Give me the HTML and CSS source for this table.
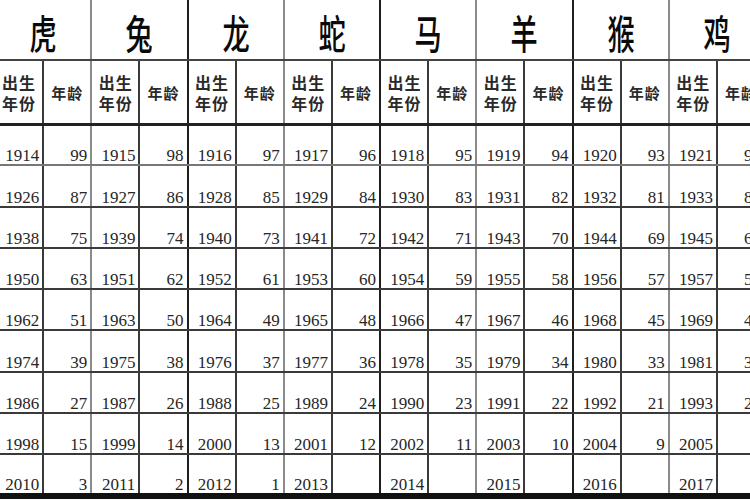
FILE: index.html
```html
<!DOCTYPE html>
<html lang="zh">
<head>
<meta charset="utf-8">
<title>生肖年龄对照表</title>
<link rel="stylesheet" href="styles.css">
</head>
<body>
<div class="sheet">
<table class="zodiac">
<colgroup>
<col class="c"><col class="c"><col class="c"><col class="c"><col class="c"><col class="c"><col class="c"><col class="c">
<col class="c"><col class="c"><col class="c"><col class="c"><col class="c"><col class="c"><col class="c"><col class="c">
</colgroup>
<tr class="head">
<th colspan="2" class="g"><span class="z">虎</span></th>
<th colspan="2" class="d"><span class="z">兔</span></th>
<th colspan="2" class="g"><span class="z">龙</span></th>
<th colspan="2" class="d"><span class="z">蛇</span></th>
<th colspan="2" class="g"><span class="z">马</span></th>
<th colspan="2" class="d"><span class="z">羊</span></th>
<th colspan="2" class="g"><span class="z">猴</span></th>
<th colspan="2" class="d"><span class="z">鸡</span></th>
</tr>
<tr class="sub">
<th class="y"><span class="l">出生</span><span class="l">年份</span></th><th class="a g">年龄</th>
<th class="y"><span class="l">出生</span><span class="l">年份</span></th><th class="a d">年龄</th>
<th class="y"><span class="l">出生</span><span class="l">年份</span></th><th class="a g">年龄</th>
<th class="y"><span class="l">出生</span><span class="l">年份</span></th><th class="a d">年龄</th>
<th class="y"><span class="l">出生</span><span class="l">年份</span></th><th class="a g">年龄</th>
<th class="y"><span class="l">出生</span><span class="l">年份</span></th><th class="a d">年龄</th>
<th class="y"><span class="l">出生</span><span class="l">年份</span></th><th class="a g">年龄</th>
<th class="y"><span class="l">出生</span><span class="l">年份</span></th><th class="a d">年龄</th>
</tr>
<tr class="row light">
<td class="y">1914</td><td class="a g">99</td><td class="y">1915</td><td class="a d">98</td><td class="y">1916</td><td class="a g">97</td><td class="y">1917</td><td class="a d">96</td><td class="y">1918</td><td class="a g">95</td><td class="y">1919</td><td class="a d">94</td><td class="y">1920</td><td class="a g">93</td><td class="y">1921</td><td class="a d">92</td>
</tr>
<tr class="row">
<td class="y">1926</td><td class="a g">87</td><td class="y">1927</td><td class="a d">86</td><td class="y">1928</td><td class="a g">85</td><td class="y">1929</td><td class="a d">84</td><td class="y">1930</td><td class="a g">83</td><td class="y">1931</td><td class="a d">82</td><td class="y">1932</td><td class="a g">81</td><td class="y">1933</td><td class="a d">80</td>
</tr>
<tr class="row">
<td class="y">1938</td><td class="a g">75</td><td class="y">1939</td><td class="a d">74</td><td class="y">1940</td><td class="a g">73</td><td class="y">1941</td><td class="a d">72</td><td class="y">1942</td><td class="a g">71</td><td class="y">1943</td><td class="a d">70</td><td class="y">1944</td><td class="a g">69</td><td class="y">1945</td><td class="a d">68</td>
</tr>
<tr class="row">
<td class="y">1950</td><td class="a g">63</td><td class="y">1951</td><td class="a d">62</td><td class="y">1952</td><td class="a g">61</td><td class="y">1953</td><td class="a d">60</td><td class="y">1954</td><td class="a g">59</td><td class="y">1955</td><td class="a d">58</td><td class="y">1956</td><td class="a g">57</td><td class="y">1957</td><td class="a d">56</td>
</tr>
<tr class="row">
<td class="y">1962</td><td class="a g">51</td><td class="y">1963</td><td class="a d">50</td><td class="y">1964</td><td class="a g">49</td><td class="y">1965</td><td class="a d">48</td><td class="y">1966</td><td class="a g">47</td><td class="y">1967</td><td class="a d">46</td><td class="y">1968</td><td class="a g">45</td><td class="y">1969</td><td class="a d">44</td>
</tr>
<tr class="row">
<td class="y">1974</td><td class="a g">39</td><td class="y">1975</td><td class="a d">38</td><td class="y">1976</td><td class="a g">37</td><td class="y">1977</td><td class="a d">36</td><td class="y">1978</td><td class="a g">35</td><td class="y">1979</td><td class="a d">34</td><td class="y">1980</td><td class="a g">33</td><td class="y">1981</td><td class="a d">32</td>
</tr>
<tr class="row">
<td class="y">1986</td><td class="a g">27</td><td class="y">1987</td><td class="a d">26</td><td class="y">1988</td><td class="a g">25</td><td class="y">1989</td><td class="a d">24</td><td class="y">1990</td><td class="a g">23</td><td class="y">1991</td><td class="a d">22</td><td class="y">1992</td><td class="a g">21</td><td class="y">1993</td><td class="a d">20</td>
</tr>
<tr class="row">
<td class="y">1998</td><td class="a g">15</td><td class="y">1999</td><td class="a d">14</td><td class="y">2000</td><td class="a g">13</td><td class="y">2001</td><td class="a d">12</td><td class="y">2002</td><td class="a g">11</td><td class="y">2003</td><td class="a d">10</td><td class="y">2004</td><td class="a g">9</td><td class="y">2005</td><td class="a d">8</td>
</tr>
<tr class="row last">
<td class="y">2010</td><td class="a g">3</td><td class="y">2011</td><td class="a d">2</td><td class="y">2012</td><td class="a g">1</td><td class="y">2013</td><td class="a d"></td><td class="y">2014</td><td class="a g"></td><td class="y">2015</td><td class="a d"></td><td class="y">2016</td><td class="a g"></td><td class="y">2017</td><td class="a d"></td>
</tr>
</table>
</div>
</body>
</html>
```
FILE: styles.css
```css
html, body {
  margin: 0;
  padding: 0;
  background: #ffffff;
}
body {
  width: 750px;
  height: 500px;
  overflow: hidden;
  font-family: "Liberation Serif", "Times New Roman", serif;
  color: #2a2a2a;
}
.sheet {
  width: 750px;
  height: 500px;
  overflow: hidden;
}
.zodiac {
  margin-left: -5px;
  margin-top: 0;
  border-collapse: collapse;
  table-layout: fixed;
  width: 770px;
}
.zodiac .c {
  width: 48.14px;
}
.zodiac th,
.zodiac td {
  padding: 0;
  border-left: none;
  border-top: none;
  border-bottom: 2px solid #3a3a3a;
  border-right: 2px solid #3a3a3a;
}
.zodiac .g {
  border-right: 2px solid #8a8a8a;
}
.zodiac .d {
  border-right: 2px solid #1e1e1e;
}
.head {
  height: 60px;
}
.head th {
  border-bottom: 2px solid #444;
  font-weight: 400;
  text-align: center;
  vertical-align: middle;
  padding-top: 4px;
}
.z {
  display: inline-block;
  font-family: "Noto Sans CJK SC", "Noto Sans CJK JP", sans-serif;
  font-weight: 500;
  font-size: 40px;
  line-height: 44px;
  color: #0a0a0a;
  transform: scaleX(0.68);
}
.sub {
  height: 64px;
}
.sub th {
  border-bottom: 3px solid #222;
  font-family: "Noto Sans CJK SC", "Noto Sans CJK JP", sans-serif;
  font-weight: 700;
  font-size: 16px;
  line-height: 21px;
  color: #2a2a2a;
  text-align: center;
  vertical-align: middle;
  padding-top: 2px;
}
.sub .l {
  display: block;
  height: 21px;
  letter-spacing: 1px;
  padding-left: 1px;
}
.sub th.a {
  font-size: 15px;
  letter-spacing: 1px;
}
.row {
  height: 41.3px;
}
.row td {
  font-size: 17px;
  line-height: 16px;
  text-align: right;
  vertical-align: bottom;
  padding-right: 3px;
  padding-bottom: 0;
  color: #262626;
}
.row.light td {
  border-bottom-color: #777;
}
.row.last td {
  border-bottom: 6px solid #111;
}
```
